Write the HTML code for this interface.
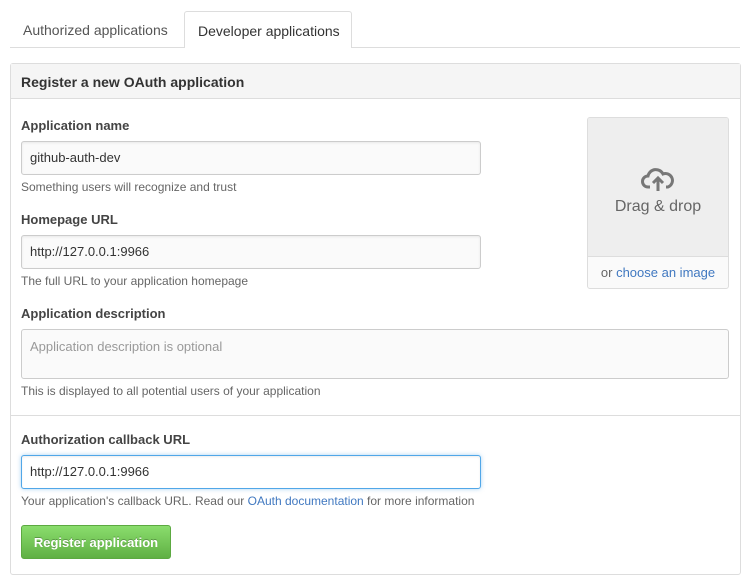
<!DOCTYPE html>
<html><head><style>
*{box-sizing:border-box;margin:0;padding:0}
body{width:750px;height:583px;background:#fff;font-family:"Liberation Sans",sans-serif;font-size:13px;color:#333;position:relative;overflow:hidden}
.a{position:absolute}
.lbl{position:absolute;left:21px;font-weight:bold;font-size:13px;color:#444}
.inp{position:absolute;left:21px;width:460px;height:34px;border:1px solid #ccc;border-radius:3px;background:#fafafa;box-shadow:inset 0 1px 2px rgba(0,0,0,.075);padding:8px;font-size:13px;color:#333}
.note{position:absolute;left:21px;font-size:12px;color:#666}
a{color:#4078c0;text-decoration:none}
</style></head><body>
<div class="a" style="left:10px;top:47px;width:730px;border-top:1px solid #ddd"></div>
<div class="a" style="left:23px;top:22px;font-size:14px;color:#555">Authorized applications</div>
<div class="a" style="left:184px;top:11px;width:168px;height:37px;border:1px solid #ddd;border-bottom:none;border-radius:3px 3px 0 0;background:#fff;padding:11px 0 0 13px;font-size:14px;color:#333">Developer applications</div>

<div class="a" style="left:10px;top:63px;width:731px;height:512px;border:1px solid #ddd;border-radius:3px"></div>
<div class="a" style="left:11px;top:64px;width:729px;height:35px;background:#f5f5f5;border-bottom:1px solid #ddd;padding:10px 0 0 10px;font-weight:bold;font-size:14px;color:#333">Register a new OAuth application</div>

<div class="lbl" style="top:118px">Application name</div>
<div class="inp" style="top:141px">github-auth-dev</div>
<div class="note" style="top:180px">Something users will recognize and trust</div>

<div class="lbl" style="top:212px">Homepage URL</div>
<div class="inp" style="top:235px">http://127.0.0.1:9966</div>
<div class="note" style="top:274px">The full URL to your application homepage</div>

<div class="a" style="left:587px;top:117px;width:142px;height:172px;border:1px solid #ddd;border-radius:3px;background:#fafafa;overflow:hidden">
  <div style="height:139px;background:#eee;border-bottom:1px solid #ddd;text-align:center;padding-top:50px">
    <svg width="34" height="24" viewBox="0 0 34 24"><path d="M9 19H7a5.5 5.5 0 0 1 0-11 8 8 0 0 1 15-2 6.5 6.5 0 0 1 5 13h-2" fill="none" stroke="#777" stroke-width="3"/><path d="M17 23V11M12 15l5-5 5 5" fill="none" stroke="#777" stroke-width="3"/></svg>
    <div style="font-size:16px;color:#666;margin-top:3px">Drag &amp; drop</div>
  </div>
  <div style="text-align:center;padding-top:8px;font-size:13px;color:#666">or <a>choose an image</a></div>
</div>

<div class="lbl" style="top:306px">Application description</div>
<div class="a" style="left:21px;top:329px;width:708px;height:50px;border:1px solid #ccc;border-radius:3px;background:#fafafa;padding:9px 8px;color:#999;font-size:13px">Application description is optional</div>
<div class="note" style="top:384px">This is displayed to all potential users of your application</div>

<div class="a" style="left:11px;top:415px;width:729px;border-top:1px solid #ddd"></div>

<div class="lbl" style="top:432px">Authorization callback URL</div>
<div class="inp" style="top:455px;border-color:#51a7e8;background:#fff;box-shadow:inset 0 1px 2px rgba(0,0,0,.075),0 0 4px rgba(81,167,232,.5)">http://127.0.0.1:9966</div>
<div class="note" style="top:494px">Your application's callback URL. Read our <a>OAuth documentation</a> for more information</div>

<div class="a" style="left:21px;top:525px;width:150px;height:34px;border:1px solid #5ca941;border-radius:3px;background:linear-gradient(#8add6d,#60b044);color:#fff;font-weight:bold;font-size:13px;text-align:center;padding-top:9px;text-shadow:0 -1px 0 rgba(0,0,0,.25)">Register application</div>
</body></html>
